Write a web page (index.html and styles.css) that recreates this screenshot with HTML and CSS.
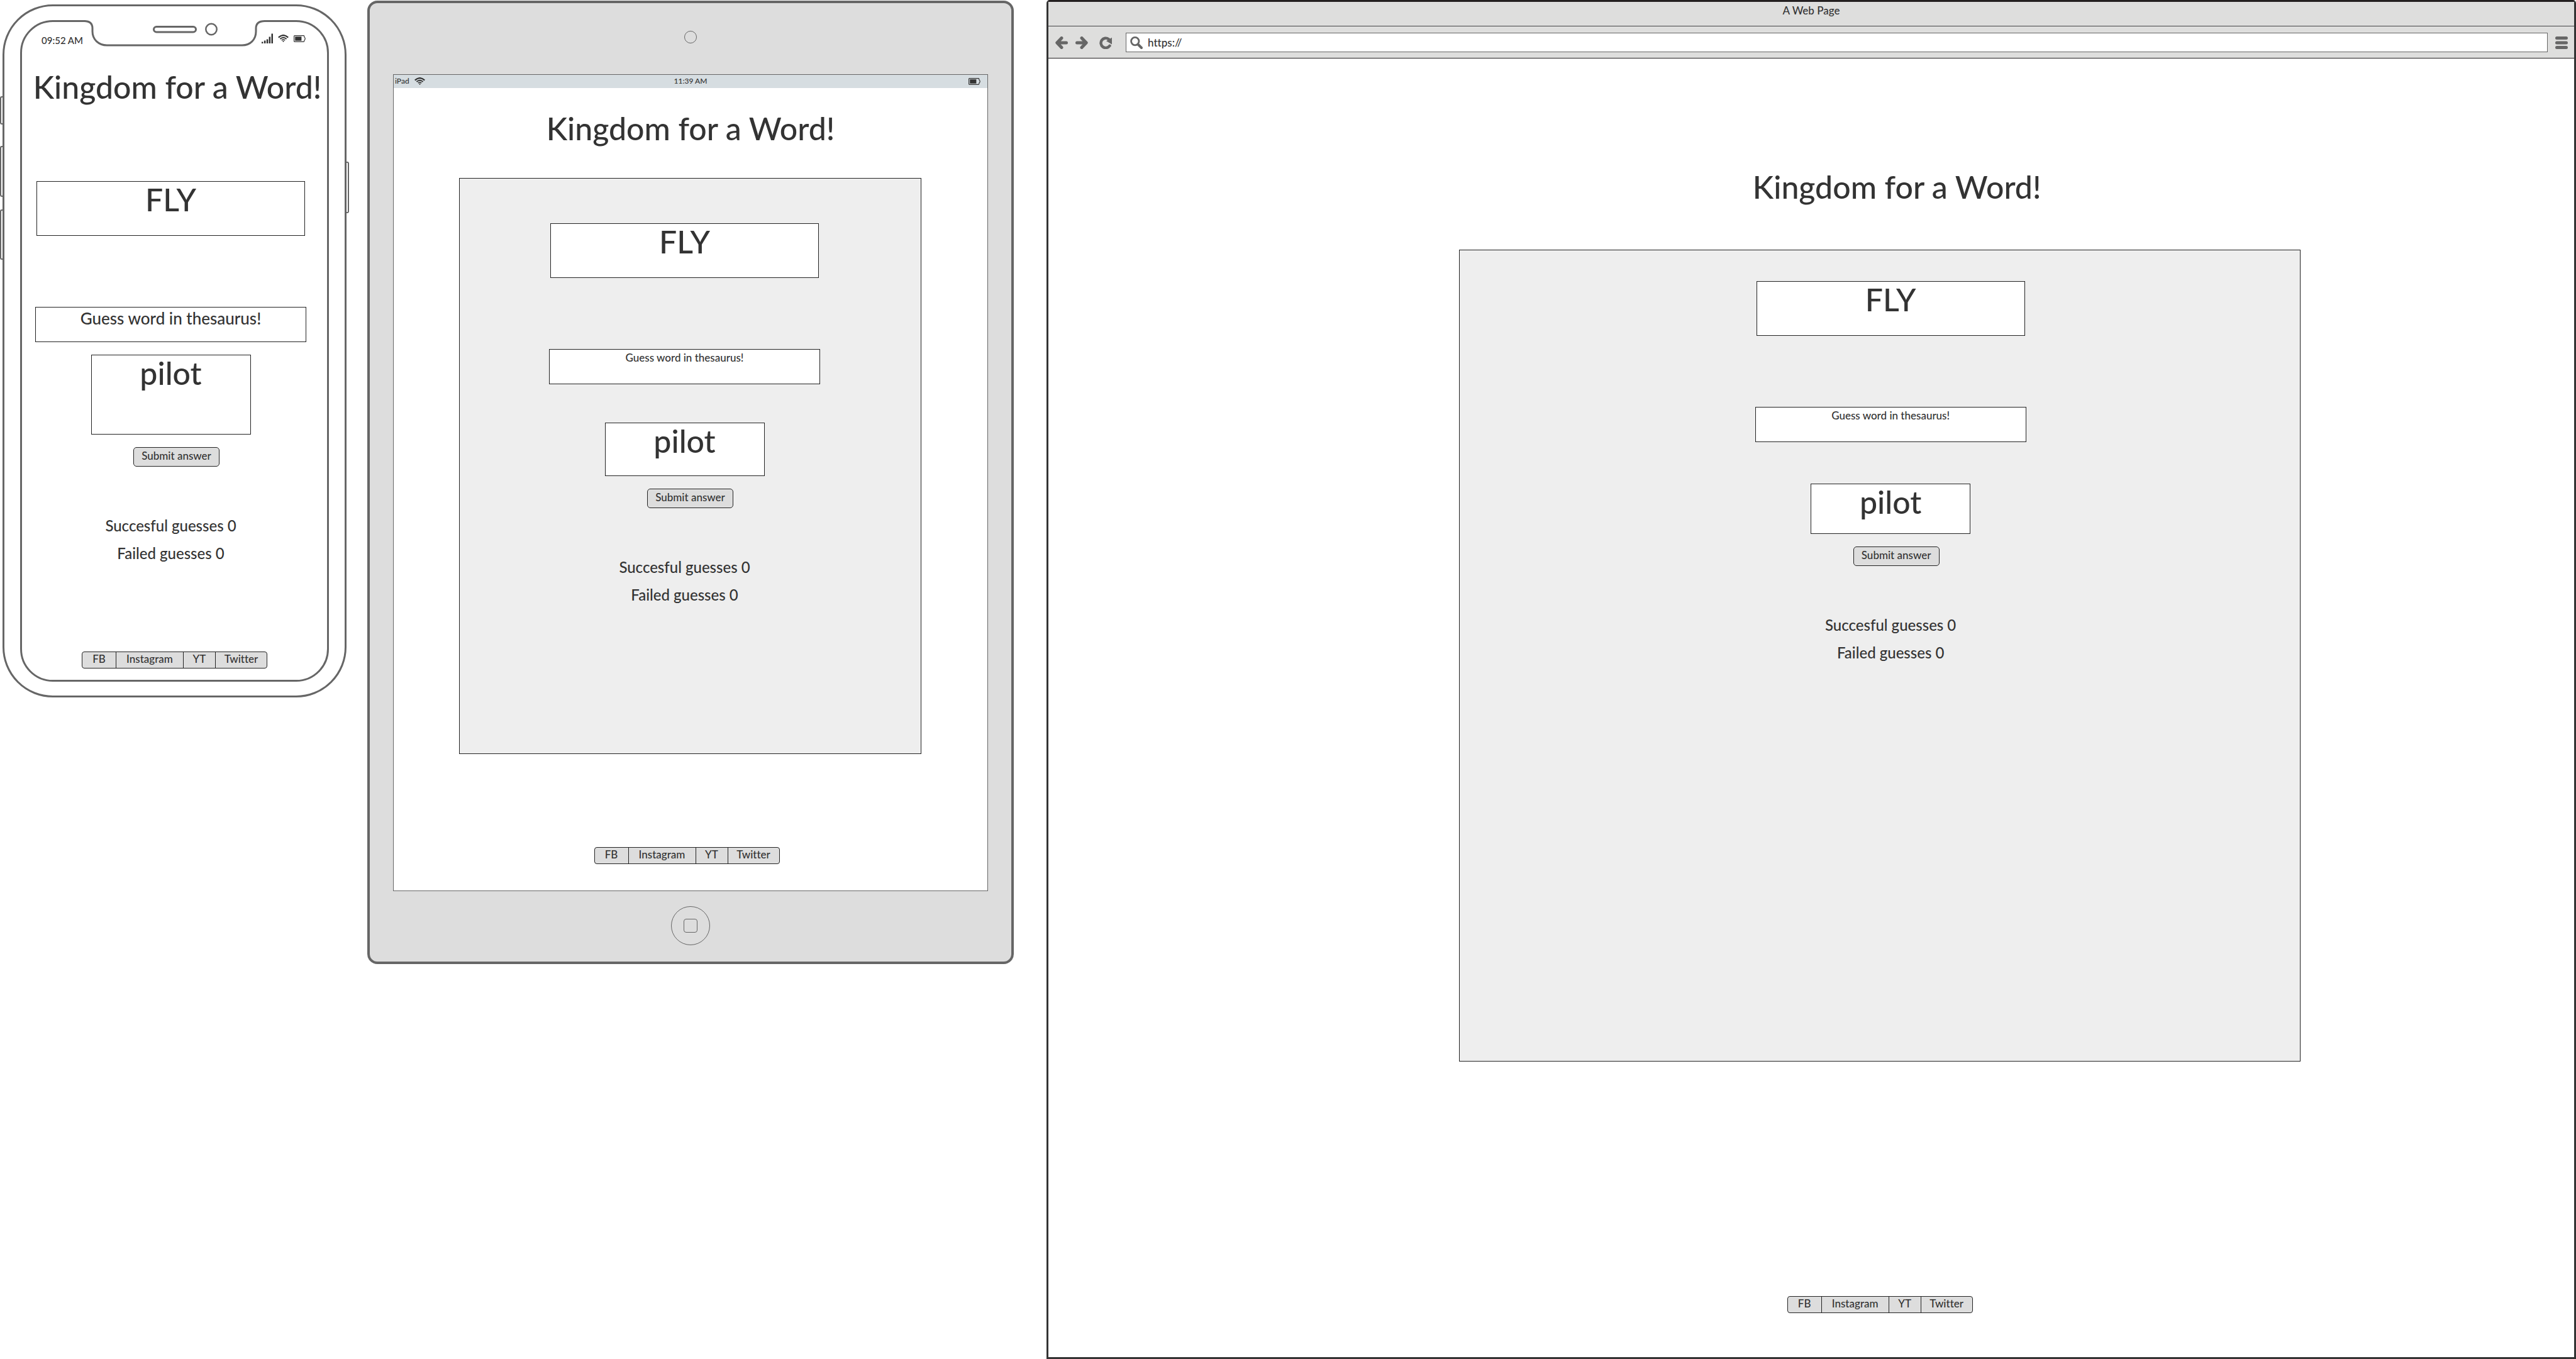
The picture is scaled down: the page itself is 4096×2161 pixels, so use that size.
FILE: index.html
```html
<!DOCTYPE html>
<html lang="en">
<head>
<meta charset="utf-8">
<title>Kingdom for a Word!</title>
<link rel="stylesheet" href="styles.css">
</head>
<body>
<svg class="sprite" aria-hidden="true">
  <symbol id="wifi" viewBox="0 0 17 12">
    <g fill="none" stroke="currentColor" stroke-linecap="butt">
      <path d="M.8 4.6Q8.5 -2.4 16.2 4.6" stroke-width="2.2"/>
      <path d="M3.4 7Q8.5 2.4 13.6 7" stroke-width="1.8"/>
      <path d="M5.8 9.2Q8.5 6.8 11.2 9.2" stroke-width="1.6"/>
    </g>
    <path d="M7 10.2Q8.500 9.200 10 10.200L8.500 12Z" fill="currentColor"/>
  </symbol>
  <symbol id="battery" viewBox="0 0 19 11">
    <path d="M1.600.6H15.800Q16.600.6 16.700 1.500L17 3.200Q18.200 3.800 18.200 5.500T17 7.800L16.700 9.500Q16.600 10.400 15.800 10.400H1.600Q.6 10.400.6 9.400V1.600Q.6.6 1.600.6Z" fill="none" stroke="currentColor" stroke-width="1.2"/>
    <path d="M2.200 2.200H12.400V8.800H2.200Z" fill="currentColor"/>
  </symbol>
  <symbol id="signal" viewBox="0 0 18 16">
    <path d="M0 13.400H2.400V16H0ZM3.900 11.500H6.400V16H3.900ZM7.800 9.400H10.300V16H7.800ZM11.600 5.600H14.100V16H11.600ZM15.500.5H18V16H15.500Z" fill="currentColor"/>
  </symbol>
</svg>

<main class="wall">
  <section class="phone" aria-label="Phone">
    <span class="key key-mute"></span>
    <span class="key key-up"></span>
    <span class="key key-down"></span>
    <span class="key key-power"></span>
    <div class="phone-frame">
      <div class="phone-screen">
        <header class="phone-status">
          <span>09:52 AM</span>
          <span class="phone-icons">
            <svg class="icon-signal"><use href="#signal"/></svg>
            <svg class="icon-wifi"><use href="#wifi"/></svg>
            <svg class="icon-battery"><use href="#battery"/></svg>
          </span>
        </header>
        <h1 class="title">Kingdom for a Word!</h1>
        <form class="game">
          <div class="word">FLY</div>
          <label class="hint" for="answer-phone">Guess word in thesaurus!</label>
          <input class="answer" id="answer-phone" type="text" value="pilot">
          <button class="submit" type="button">Submit answer</button>
          <div class="scores">
            <p>Succesful guesses 0</p>
            <p>Failed guesses 0</p>
          </div>
        </form>
        <nav class="social"><a href="#fb">FB</a><a href="#instagram">Instagram</a><a href="#yt">YT</a><a href="#twitter">Twitter</a></nav>
      </div>
    </div>
    <svg class="notch" viewBox="130 30 296 46" aria-hidden="true">
      <path d="M136 30H420V38H136Z" fill="#fff"/>
      <path d="M134 33.500C143 33.500 147 38 147 45V50C147 63 157 72 170 72H385C398 72 407 63 407 50V45C407 38 411 33.500 421 33.500" fill="#fff" stroke="#666" stroke-width="3"/>
      <rect x="244.500" y="42.500" width="67" height="8.500" rx="4.250" fill="#fff" stroke="#666" stroke-width="3"/>
      <circle cx="336" cy="46.500" r="8.700" fill="#fff" stroke="#666" stroke-width="2.500"/>
    </svg>
  </section>

  <section class="tablet" aria-label="Tablet">
    <span class="camera"></span>
    <div class="tablet-screen">
      <header class="tablet-status">
        <span class="carrier">iPad <svg class="icon-wifi"><use href="#wifi"/></svg></span>
        <span>11:39 AM</span>
        <span class="charge"><svg class="icon-battery"><use href="#battery"/></svg></span>
      </header>
      <h1 class="title">Kingdom for a Word!</h1>
      <form class="game">
        <div class="word">FLY</div>
        <label class="hint" for="answer-tablet">Guess word in thesaurus!</label>
        <input class="answer" id="answer-tablet" type="text" value="pilot">
        <button class="submit" type="button">Submit answer</button>
        <div class="scores">
          <p>Succesful guesses 0</p>
          <p>Failed guesses 0</p>
        </div>
      </form>
      <nav class="social"><a href="#fb">FB</a><a href="#instagram">Instagram</a><a href="#yt">YT</a><a href="#twitter">Twitter</a></nav>
    </div>
    <button class="home" type="button" aria-label="Home"><span></span></button>
  </section>

  <section class="browser" aria-label="Browser">
    <header class="chrome">
      <div class="chrome-title">A Web Page</div>
      <div class="toolbar">
        <button class="tool" type="button" aria-label="Back"><svg viewBox="0 0 20 20"><path d="M17.500 10H4M10 2.500L2.800 10L10 17.500" fill="none" stroke="currentColor" stroke-width="5" stroke-linecap="round" stroke-linejoin="round"/></svg></button>
        <button class="tool" type="button" aria-label="Forward"><svg viewBox="0 0 20 20"><path d="M2.500 10H16M10 2.500L17.200 10L10 17.500" fill="none" stroke="currentColor" stroke-width="5" stroke-linecap="round" stroke-linejoin="round"/></svg></button>
        <button class="tool tool-reload" type="button" aria-label="Reload"><svg viewBox="0 0 20 20"><path d="M14.800 4.200A7.700 7.700 0 1 0 16.500 14.800" fill="none" stroke="currentColor" stroke-width="4.400" stroke-linecap="round"/><path d="M20 1.700V12.600L11 7.200Z" fill="currentColor"/></svg></button>
        <div class="address">
          <svg viewBox="0 0 20 20"><circle cx="7.800" cy="7.600" r="6.200" fill="none" stroke="currentColor" stroke-width="2.800"/><path d="M12.500 12.500L18 18" stroke="currentColor" stroke-width="4" stroke-linecap="round"/></svg>
          <input type="text" value="https://" aria-label="Address">
        </div>
        <button class="tool" type="button" aria-label="Menu"><svg viewBox="0 0 20 20"><path d="M2.500 2.500H17.500M2.500 10H17.500M2.500 17.500H17.500" stroke="currentColor" stroke-width="5" stroke-linecap="round"/></svg></button>
      </div>
    </header>
    <div class="page">
      <h1 class="title">Kingdom for a Word!</h1>
      <form class="game">
        <div class="word">FLY</div>
        <label class="hint" for="answer-web">Guess word in thesaurus!</label>
        <input class="answer" id="answer-web" type="text" value="pilot">
        <button class="submit" type="button">Submit answer</button>
        <div class="scores">
          <p>Succesful guesses 0</p>
          <p>Failed guesses 0</p>
        </div>
      </form>
      <nav class="social"><a href="#fb">FB</a><a href="#instagram">Instagram</a><a href="#yt">YT</a><a href="#twitter">Twitter</a></nav>
    </div>
  </section>
</main>
</body>
</html>
```
FILE: styles.css
```css
* {
  box-sizing: border-box;
}

body {
  margin: 0;
  background: #fff;
  color: #333;
  font: 500 17px/26px Lato, "Open Sans", sans-serif;
  font-variant-ligatures: none;
}

h1,
p {
  margin: 0;
}

button,
input {
  margin: 0;
  color: inherit;
  font: inherit;
}

svg {
  display: block;
}

.sprite {
  position: absolute;
  width: 0;
  height: 0;
}

.wall {
  display: flex;
  align-items: flex-start;
  min-height: 100vh;
}

/* Shared game parts */

.title {
  font-size: 50px;
  font-weight: 500;
  line-height: 56px;
  white-space: nowrap;
}

.game {
  display: flex;
  flex-direction: column;
  align-items: center;
}

.word {
  width: 427px;
  padding-bottom: 29px;
  border: 1px solid #222;
  background: #fff;
  font-size: 50px;
  line-height: 56px;
  text-align: center;
}

.hint {
  width: 431px;
  height: 56px;
  margin-top: 113px;
  border: 1px solid #222;
  background: #fff;
  text-align: center;
}

.answer {
  width: 254px;
  height: 85px;
  padding: 0 0 27px;
  border: 1px solid #222;
  border-radius: 0;
  background: #fff;
  font-size: 50px;
  line-height: 56px;
  text-align: center;
}

.submit {
  width: 137px;
  margin: 20px 0 0 18px;
  padding: 0 0 3px;
  border: 1px solid #222;
  border-radius: 5px;
  background: #ddd;
}

.scores {
  margin-top: 72px;
  font-size: 24px;
  line-height: 44px;
  text-align: center;
}

.social {
  display: grid;
  grid-template-columns: 53px 107px 51px 82px;
  border: 1px solid #222;
  border-radius: 4px;
  background: #ddd;
  line-height: 22px;
  text-align: center;
}

.social a {
  padding-bottom: 3px;
  color: inherit;
  text-decoration: none;
}

.social a + a {
  border-left: 1px solid #222;
}

.icon-wifi {
  width: 17px;
  height: 12px;
}

.icon-battery {
  width: 19px;
  height: 11px;
}

.icon-signal {
  width: 18px;
  height: 16px;
}

/* Phone */

.phone {
  position: relative;
  flex: none;
  width: 555px;
  padding: 7px 4px;
}

.phone-frame {
  padding: 22px 25px;
  border: 3px solid #666;
  border-radius: 80px;
  background: #fff;
}

.phone-screen {
  display: flex;
  flex-direction: column;
  align-items: center;
  padding: 18px 0;
  border: 3px solid #666;
  border-radius: 52px;
}

.phone-status {
  display: flex;
  justify-content: space-between;
  align-self: stretch;
  padding: 0 34px 0 31px;
  font-size: 15px;
  line-height: 22px;
}

.phone-icons {
  display: flex;
  align-items: center;
  gap: 8px;
  height: 16px;
}

.phone .title {
  margin: 35px 0 0 9px;
}

.phone .game {
  margin: 122px 12px 134px 0;
}

.phone .hint {
  font-size: 26px;
  line-height: 34px;
}

.phone .answer {
  height: 127px;
  margin-top: 20px;
  padding-bottom: 69px;
}

.notch {
  position: absolute;
  top: 30px;
  left: 130px;
  width: 296px;
  height: 46px;
}

.key {
  position: absolute;
  left: 0;
  width: 5px;
  border: 2px solid #666;
  border-right: 0;
  border-radius: 3px 0 0 3px;
}

.key-mute {
  top: 153px;
  height: 45px;
}

.key-up {
  top: 232px;
  height: 81px;
}

.key-down {
  top: 333px;
  height: 80px;
}

.key-power {
  top: 257px;
  right: 0;
  left: auto;
  height: 82px;
  border: 2px solid #666;
  border-left: 0;
  border-radius: 0 3px 3px 0;
}

/* Tablet */

.tablet {
  display: flex;
  flex: none;
  flex-direction: column;
  align-items: center;
  width: 1028px;
  margin: 1px 0 0 29px;
  padding: 44px 37px 26px;
  border: 4px solid #666;
  border-radius: 16px;
  background: #ddd;
}

.camera {
  width: 20px;
  height: 20px;
  margin-bottom: 49px;
  border: 1px solid #666;
  border-radius: 50%;
}

.tablet-screen {
  display: flex;
  flex-direction: column;
  align-items: center;
  align-self: stretch;
  padding-bottom: 42px;
  border: 1px solid #666;
  background: #fff;
}

.tablet-status {
  display: grid;
  grid-template-columns: 1fr auto 1fr;
  align-self: stretch;
  padding: 0 2px 1px;
  background: #d6dde1;
  font-size: 12px;
  line-height: 20px;
}

.carrier {
  display: flex;
  align-items: center;
  gap: 8px;
}

.charge {
  display: flex;
  align-items: center;
  justify-content: flex-end;
  padding-right: 9px;
}

.tablet .title {
  margin-top: 36px;
}

.tablet .game {
  width: 735px;
  margin: 51px 2px 148px 0;
  padding: 71px 17px 230px 0;
  border: 1px solid #222;
  background: #eee;
}

.tablet .answer {
  margin-top: 61px;
}

.tablet .social {
  margin-right: 12px;
}

.home {
  display: grid;
  place-items: center;
  width: 62px;
  height: 62px;
  margin-top: 24px;
  padding: 0;
  border: 1px solid #666;
  border-radius: 50%;
  background: none;
}

.home span {
  width: 22px;
  height: 22px;
  border: 1px solid #666;
  border-radius: 4px;
}

/* Browser window */

.browser {
  flex: 1;
  min-width: 1400px;
  min-height: 100vh;
  margin-left: 52px;
  border: 3px solid #333;
  border-top-color: #231f20;
  border-radius: 5px 5px 0 0;
}

.chrome {
  border-bottom: 1px solid #231f20;
  background: #dededd;
}

.chrome-title {
  padding: 1px 0 11px;
  border-bottom: 1px solid #444;
  text-align: center;
}

.toolbar {
  display: flex;
  align-items: center;
  gap: 12px;
  padding: 10px 10px 9px 11px;
  color: #666;
}

.tool {
  flex: none;
  width: 20px;
  height: 20px;
  padding: 0;
  border: 0;
  background: none;
}

.tool-reload {
  margin: 0 10px 0 6px;
}

.address {
  display: flex;
  flex: 1;
  align-items: center;
  gap: 8px;
  height: 31px;
  padding-left: 6px;
  border: 1px solid #666;
  background: #fff;
}

.address svg {
  flex: none;
  width: 20px;
  height: 20px;
}

.address input {
  flex: 1;
  padding: 0;
  border: 0;
  background: none;
  color: #333;
}

.page {
  display: flex;
  flex-direction: column;
  align-items: center;
  padding: 176px 0 70px 9%;
}

.page .title {
  margin-left: 54px;
}

.page .game {
  width: 60.6%;
  min-width: 500px;
  min-height: 1291px;
  margin: 72px 0 373px;
  padding: 49px 0 49px 34px;
  border: 1px solid #222;
  background: #eee;
}

.page .answer {
  height: 80px;
  margin-top: 66px;
  padding-bottom: 22px;
}
```
